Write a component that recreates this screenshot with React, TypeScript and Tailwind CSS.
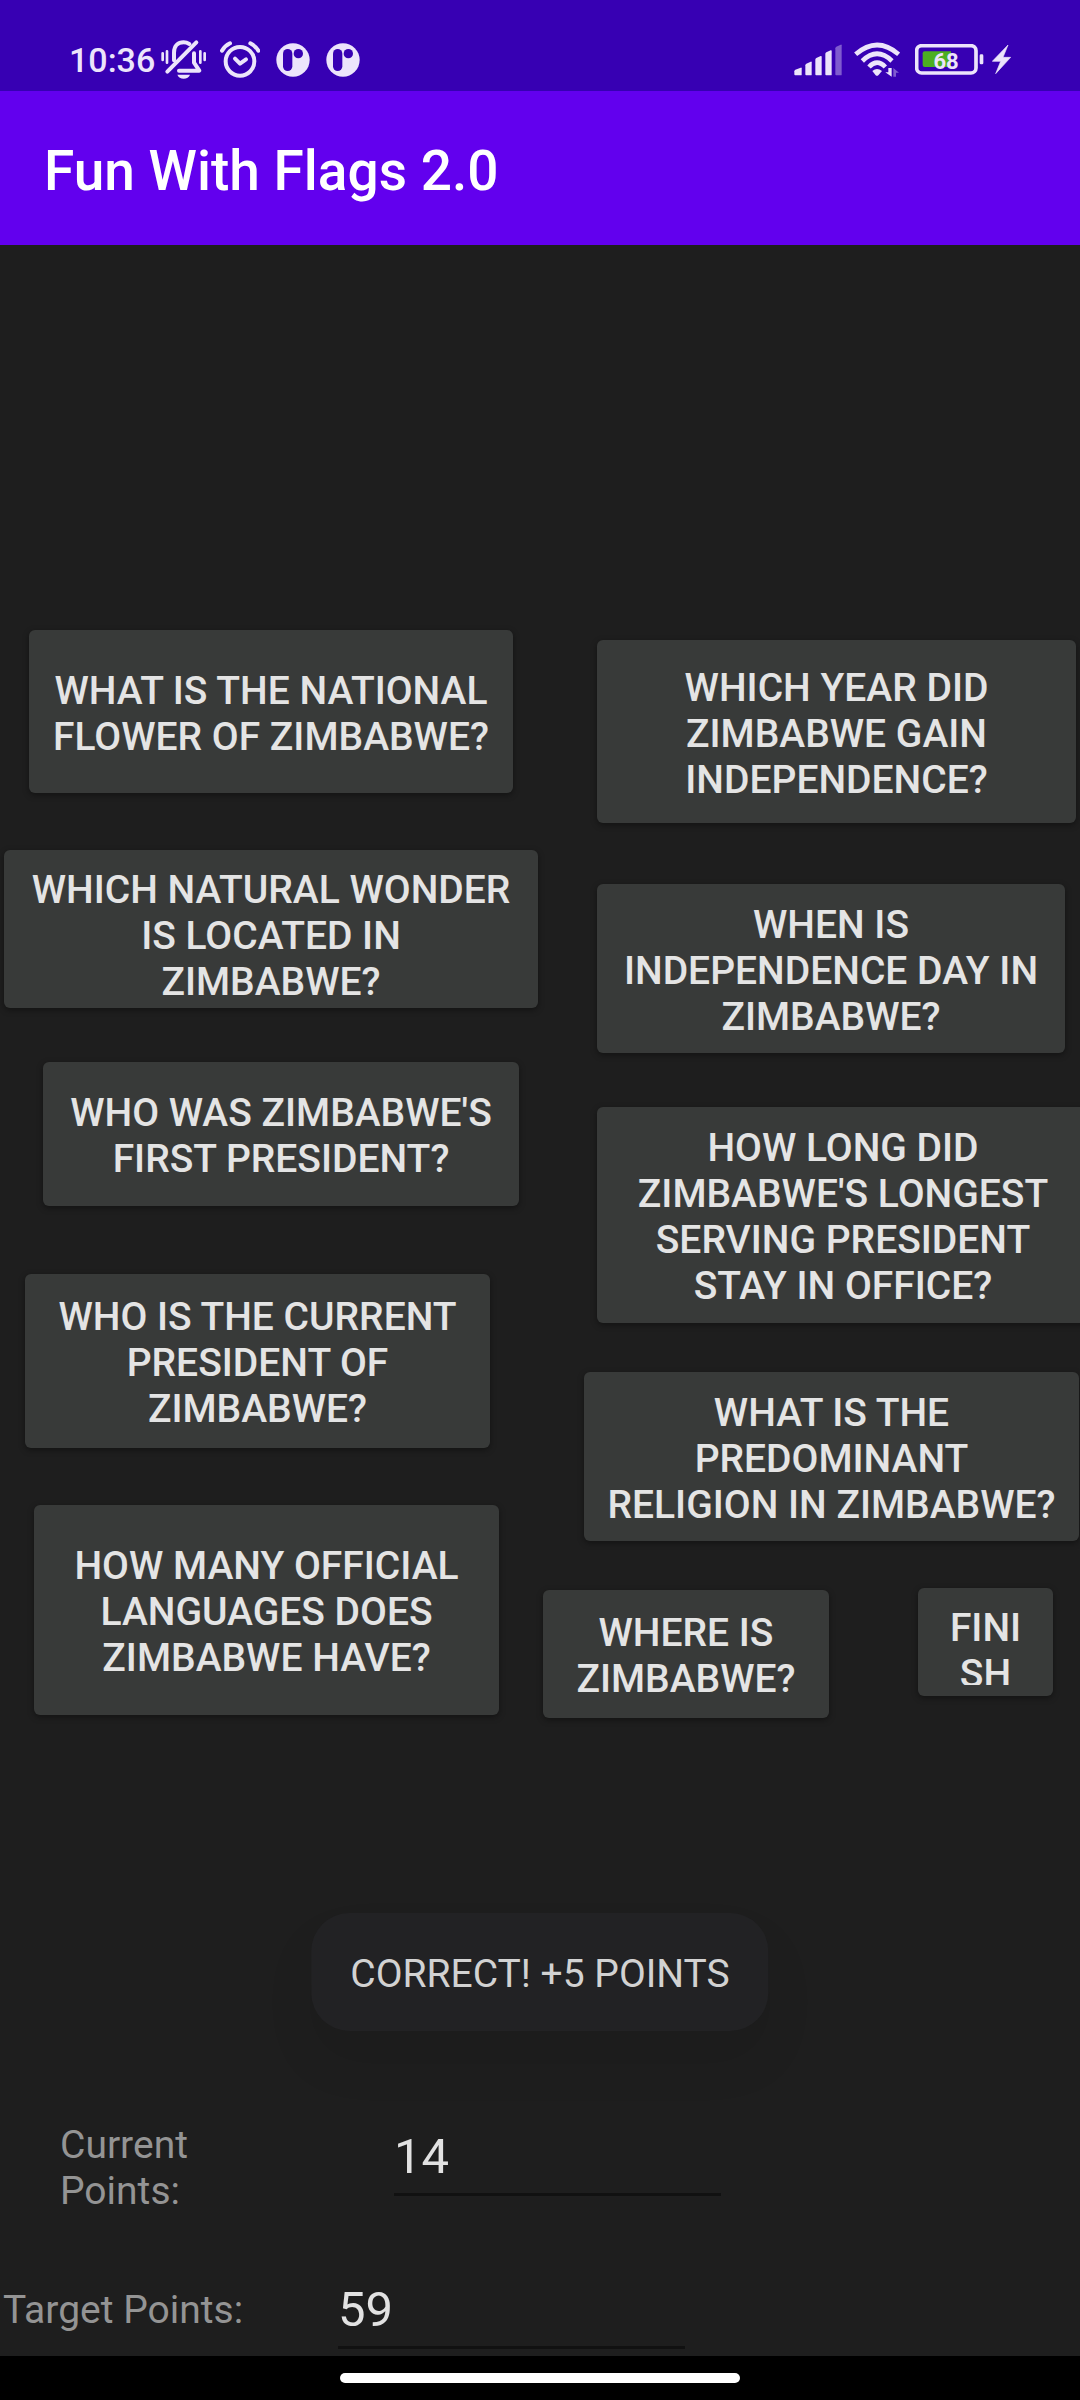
import React from "react";

type Question = { text: string; box: string; pad?: string };

const leftQuestions: Question[] = [
  { text: "What is the national flower of Zimbabwe?", box: "ml-[29px] mr-[27px] h-[163px]" },
  { text: "Which natural wonder is located in Zimbabwe?", box: "mt-[57px] ml-1 mr-0.5 h-[158px]", pad: "px-[26px] pt-[17px] pb-[3px]" },
  { text: "Who was Zimbabwe's first president?", box: "mt-[54px] ml-[43px] mr-[21px] h-36" },
  { text: "Who is the current president of Zimbabwe?", box: "mt-[68px] ml-[25px] mr-[50px] h-[174px]" },
  { text: "How many official languages does Zimbabwe have?", box: "mt-[57px] ml-[34px] mr-[41px] h-[210px]" },
];

const rightQuestions: Question[] = [
  { text: "Which year did Zimbabwe gain independence?", box: "ml-[57px] mr-1 h-[183px]" },
  { text: "When is Independence Day in Zimbabwe?", box: "mt-[61px] ml-[57px] mr-[15px] h-[169px]" },
  { text: "How long did Zimbabwe's longest serving president stay in office?", box: "mt-[54px] ml-[57px] -mr-[9px] h-[216px]" },
  { text: "What is the predominant religion in Zimbabwe?", box: "mt-[49px] ml-[44px] mr-px h-[169px]" },
];

function QuizButton({ text, box, pad = "px-[22px] pt-[15px] pb-[11px]" }: Question) {
  return (
    <button
      type="button"
      className={`flex items-center justify-center rounded-md bg-[#383a39] text-center text-[39px] leading-[46px] font-medium text-[#e4e4e4] uppercase shadow-[0_2px_6px_rgba(0,0,0,0.4)] ${pad} ${box}`}
    >
      <span className="max-h-full min-w-0 overflow-hidden wrap-anywhere">{text}</span>
    </button>
  );
}

function MutedBell() {
  return (
    <svg width="45" height="41" viewBox="364 58 135 123" fill="none" stroke="currentColor" strokeWidth="12" strokeLinecap="round" strokeLinejoin="round">
      <path d="M403 122V99c0-20 12-31 29-31 7 0 12 2 17 5" />
      <path d="M383 156L470 68" />
      <path d="M463 101v28l16 24H418" />
      <path d="M413 165h38c-3 8-10 12-19 12s-16-4-19-12z" fill="currentColor" stroke="none" />
      <path d="M369 101v20M382 95v34M482 95v34M495 101v20" strokeWidth="8" />
    </svg>
  );
}

function AlarmClock() {
  return (
    <svg width="40" height="38" viewBox="541 60 120 114" fill="none" stroke="currentColor" strokeWidth="12" strokeLinecap="round" strokeLinejoin="round">
      <circle cx="601" cy="121" r="43" />
      <path d="M586 113l15 15 18-13" />
      <path d="M547 89q8-14 24-22M632 67q16 8 24 22" />
    </svg>
  );
}

function AppBadge() {
  return (
    <svg width="34" height="34" viewBox="705 66 102 102">
      <circle cx="756" cy="117" r="50" fill="currentColor" />
      <rect x="726" y="84" width="28" height="66" rx="14" fill="#3700b3" />
      <circle cx="772" cy="98" r="14" fill="#3700b3" />
    </svg>
  );
}

function Signal() {
  return (
    <svg width="48" height="32" viewBox="72 71 144 96" fill="currentColor">
      <path d="M73 153q0-3 3-5l16-6q3-1 3 2v19q0 2-3 2H76q-3 0-3-3z" />
      <path d="M106 135q0-3 3-5l13-6q3-1 3 2v37q0 2-3 2h-13q-3 0-3-3z" />
      <path d="M136 118q0-3 3-5l13-6q3-1 3 2v54q0 2-3 2h-13q-3 0-3-3z" />
      <path d="M166 101q0-3 3-5l13-6q3-1 3 2v71q0 2-3 2h-13q-3 0-3-3z" />
      <path d="M196 84q0-3 3-5l13-6q3-1 3 2v88q0 2-3 2h-13q-3 0-3-3z" opacity="0.4" />
    </svg>
  );
}

function Wifi() {
  return (
    <svg width="46" height="36" viewBox="254 66 138 108" fill="none" stroke="currentColor" strokeWidth="14">
      <path d="M259 103Q323 47 388 103" />
      <path d="M279 123Q323 80 368 123" />
      <path d="M299 141Q323 115 348 141" />
      <path d="M309 153q14-12 29 0l-11 13q-4 3-8 0z" fill="currentColor" stroke="none" />
      <path d="M367 144v26l-19-13h9v-13z" fill="currentColor" stroke="none" />
      <path d="M372 170v-26l17 14h-9v12z" fill="currentColor" stroke="none" opacity="0.4" />
    </svg>
  );
}

function Battery() {
  return (
    <span className="relative block">
      <svg width="69" height="31" viewBox="437 71 207 93">
        <rect x="442" y="76" width="178" height="82" rx="15" fill="none" stroke="currentColor" strokeWidth="11" />
        <path d="M466 93h79v47h-79q-6 0-6-6v-35q0-6 6-6z" fill="#4caf22" />
        <rect x="631" y="102" width="11" height="30" rx="4" fill="currentColor" />
      </svg>
      <span className="absolute inset-y-0 left-0 flex w-[62px] items-center justify-center pt-1 text-[22px] leading-none font-bold">68</span>
    </span>
  );
}

function Bolt() {
  return (
    <svg width="19" height="29" viewBox="666 74 57 87" fill="currentColor">
      <path d="M714 74L667 123h25l-15 37 45-49h-23z" stroke="currentColor" strokeWidth="2" />
    </svg>
  );
}

function StatusBar() {
  return (
    <div className="flex h-[91px] items-center justify-between bg-[#3700b3] pt-7 pr-[69px] pl-[69px] text-[#ece4fb]">
      <div className="flex items-center">
        <span className="pt-px text-[34px] leading-10 font-medium">10:36</span>
        <div className="ml-1.5 flex items-center gap-4">
          <div className="flex items-center gap-3.5">
            <MutedBell />
            <AlarmClock />
          </div>
          <AppBadge />
          <AppBadge />
        </div>
      </div>
      <div className="flex items-center">
        <Signal />
        <span className="ml-3"><Wifi /></span>
        <span className="ml-[15px]"><Battery /></span>
        <span className="ml-2"><Bolt /></span>
      </div>
    </div>
  );
}

const inputStyle =
  "h-[68px] border-b-[3px] border-[#111111] bg-transparent pb-[9px] text-[49px] leading-[56px] text-[#e2e2e2] outline-none";

export default function App() {
  return (
    <div className="relative flex min-h-screen flex-col overflow-hidden bg-[#1e1e1e] font-['Roboto',sans-serif]">
      <StatusBar />
      <header className="flex h-[154px] items-center bg-[#6200ee] pt-1.5 pl-11">
        <h1 className="text-[55px] leading-[64px] font-medium text-white">Fun With Flags 2.0</h1>
      </header>

      <main className="flex flex-1 flex-col justify-between pb-[7px]">
        <div className="grid grid-cols-2">
          <div className="flex flex-col pt-[385px]">
            {leftQuestions.map((q) => (
              <QuizButton key={q.text} {...q} />
            ))}
          </div>
          <div className="flex flex-col pt-[395px]">
            {rightQuestions.map((q) => (
              <QuizButton key={q.text} {...q} />
            ))}
            <div className="mt-[47px] mr-[27px] ml-[3px] flex items-start gap-[89px]">
              <QuizButton text="Where is Zimbabwe?" box="mt-0.5 h-32 flex-1" />
              <QuizButton text="Finish" box="h-[108px] w-[135px]" pad="px-[22px] pt-[17px] pb-[11px]" />
            </div>
          </div>
        </div>

        <form className="flex flex-col gap-[67px]">
          <div className="flex items-start pl-[60px]">
            <label htmlFor="current" className="mt-0.5 w-[150px] text-[39px] leading-[46px] text-[#949494]">Current Points:</label>
            <input id="current" defaultValue="14" className={`mt-2 ml-[184px] w-[327px] ${inputStyle}`} />
          </div>
          <div className="flex items-start pl-[3px]">
            <label htmlFor="target" className="mt-1.5 w-[250px] text-[39px] leading-[46px] text-[#949494]">Target Points:</label>
            <input id="target" defaultValue="59" className={`ml-[85px] w-[347px] ${inputStyle}`} />
          </div>
        </form>
      </main>

      <div
        role="status"
        className="absolute bottom-[369px] left-1/2 flex h-[118px] -translate-x-1/2 items-center rounded-[38px] bg-[#222224] px-[39px] pt-1 text-[39px] leading-[46px] whitespace-nowrap text-[#d2d2d2] shadow-[0_30px_50px_rgba(0,0,0,0.08)]"
      >
        CORRECT! +5 POINTS
      </div>

      <nav className="flex h-11 items-center justify-center bg-black">
        <button type="button" aria-label="Home" className="h-2.5 w-[400px] rounded-full bg-white" />
      </nav>
    </div>
  );
}
